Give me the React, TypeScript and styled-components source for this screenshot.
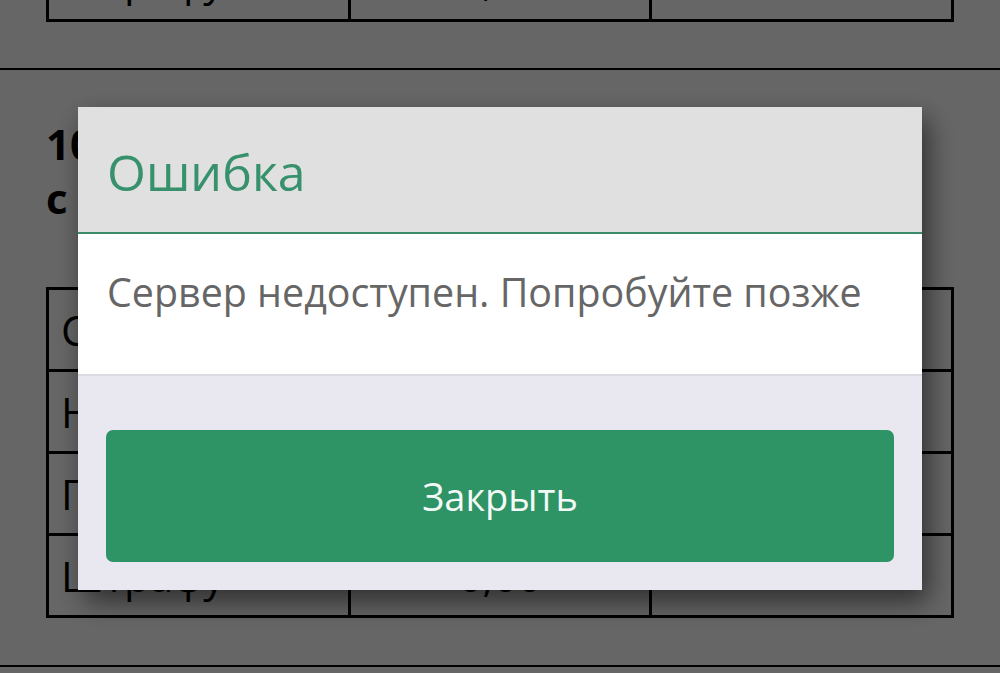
import React from "react";
import styled, { createGlobalStyle } from "styled-components";

const GlobalStyle = createGlobalStyle`
  html, body {
    margin: 0;
    padding: 0;
    background: #fff;
    font-family: "Open Sans", "Noto Sans", sans-serif;
    overflow: hidden;
  }
  * {
    box-sizing: border-box;
  }
`;

const Page = styled.div`
  margin-top: -63px;
  color: #000;
`;

const Section = styled.section<{ top?: boolean }>`
  padding: ${(p) => (p.top ? "0 46px 46px" : "47px 46px 47px")};
  border-bottom: 2px solid #000;
`;

const Heading = styled.h3`
  margin: 0 0 62px;
  font-size: 42px;
  line-height: 54px;
  font-weight: 700;
`;

const Table = styled.div`
  display: grid;
  grid-template-columns: 1fr 1fr 1fr;
  border-top: 3px solid #000;
  border-left: 3px solid #000;
`;

const Cell = styled.div<{ center?: boolean }>`
  height: 82px;
  display: flex;
  align-items: center;
  justify-content: ${(p) => (p.center ? "center" : "flex-start")};
  padding: 0 12px;
  border-right: 3px solid #000;
  border-bottom: 3px solid #000;
  font-size: 42px;
  white-space: nowrap;
  overflow: hidden;
`;

const Overlay = styled.div`
  position: fixed;
  inset: 0;
  background: rgba(0, 0, 0, 0.6);
  display: flex;
  justify-content: center;
  align-items: flex-start;
  padding-top: 107px;
  z-index: 10;
`;

const Dialog = styled.div`
  width: 844px;
  display: flex;
  flex-direction: column;
  box-shadow: 6px 12px 26px rgba(0, 0, 0, 0.55);
`;

const Header = styled.div`
  background: #e0e0e0;
  padding: 33px 29px 27px;
  border-bottom: 2px solid #3a8b69;
`;

const Title = styled.h2`
  margin: 0;
  font-size: 50px;
  font-weight: 400;
  line-height: 65px;
  color: #37916c;
`;

const Body = styled.div`
  background: #fff;
  padding: 34px 29px 57px;
  font-size: 39.4px;
  line-height: 49px;
  color: #666;
  white-space: nowrap;
`;

const Footer = styled.div`
  background: #e9e8f1;
  border-top: 2px solid #dcdbe3;
  padding: 54px 28px 28px;
`;

const CloseButton = styled.button`
  width: 100%;
  height: 132px;
  border: none;
  border-radius: 7px;
  background: #2e9365;
  color: #f3faf6;
  font-family: "Open Sans", "Noto Sans", sans-serif;
  font-size: 38px;
  display: flex;
  align-items: center;
  justify-content: center;
  cursor: pointer;
`;

const rows = [
  ["Сумма", "1 250,00", ""],
  ["НДС", "0,00", ""],
  ["Пени", "0,00", ""],
  ["Штрафу", "0,00", ""],
];

export default function App() {
  return (
    <>
      <GlobalStyle />
      <Page>
        <Section top>
          <Table>
            <Cell>Штрафу</Cell>
            <Cell center>0,00</Cell>
            <Cell center></Cell>
          </Table>
        </Section>
        <Section>
          <Heading>
            10. Начисления
            <br />
            с округлением
          </Heading>
          <Table>
            {rows.map((r, i) =>
              r.map((v, j) => (
                <Cell key={`${i}-${j}`} center={j > 0}>
                  {v}
                </Cell>
              ))
            )}
          </Table>
        </Section>
      </Page>
      <Overlay>
        <Dialog>
          <Header>
            <Title>Ошибка</Title>
          </Header>
          <Body>Сервер недоступен. Попробуйте позже</Body>
          <Footer>
            <CloseButton>Закрыть</CloseButton>
          </Footer>
        </Dialog>
      </Overlay>
    </>
  );
}
